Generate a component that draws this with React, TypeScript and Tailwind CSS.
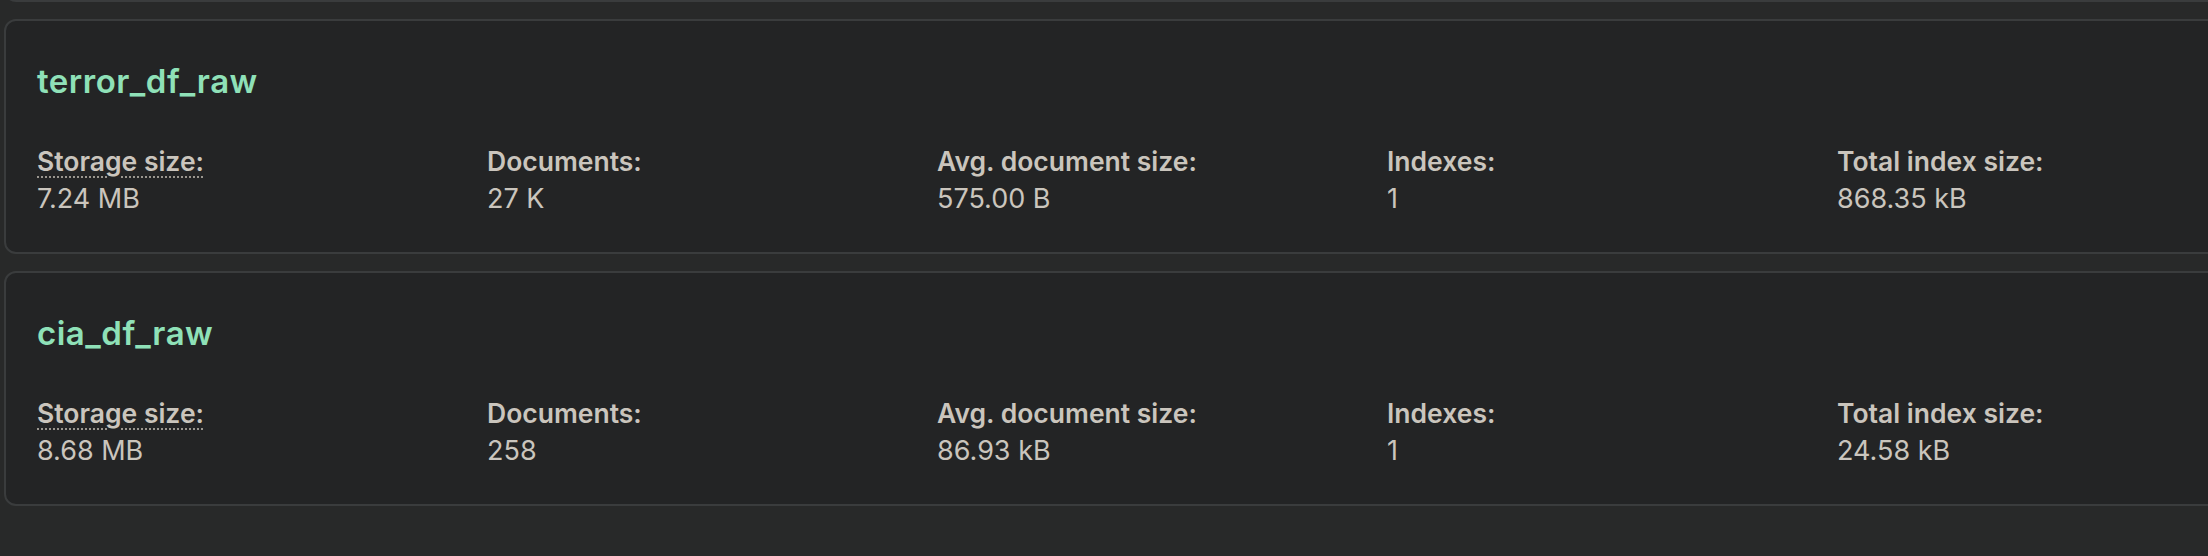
type Collection = {
  name: string;
  storage: string;
  documents: string;
  avgSize: string;
  indexes: string;
  indexSize: string;
};

const collections: Collection[] = [
  { name: "terror_df_raw", storage: "7.24 MB", documents: "27 K", avgSize: "575.00 B", indexes: "1", indexSize: "868.35 kB" },
  { name: "cia_df_raw", storage: "8.68 MB", documents: "258", avgSize: "86.93 kB", indexes: "1", indexSize: "24.58 kB" },
];

function Stat({ label, value, hint }: { label: string; value: string; hint?: boolean }) {
  return (
    <div className="flex flex-col">
      <span
        className={
          "text-[26.5px] leading-[38px] font-semibold " +
          (hint ? "underline decoration-dotted decoration-[2px] underline-offset-[5px] decoration-[#9a968f] w-fit" : "")
        }
      >
        {label}
      </span>
      <span className="text-[27px] leading-[38px] font-normal">{value}</span>
    </div>
  );
}

function CollectionCard({ c }: { c: Collection }) {
  return (
    <div className="h-[235px] w-[2330px] shrink-0 rounded-[12px] border-2 border-[#3a3c3d] bg-[#232425] pl-[31px] pt-[40px]">
      <h2 className="text-[33px] leading-[40px] font-semibold tracking-[0.5px] text-[#8fe1b8]">{c.name}</h2>
      <div className="mt-[41px] grid grid-cols-[450px_450px_450px_450px_450px] text-[#cac5bd]">
        <Stat label="Storage size:" value={c.storage} hint />
        <Stat label="Documents:" value={c.documents} />
        <Stat label="Avg. document size:" value={c.avgSize} />
        <Stat label="Indexes:" value={c.indexes} />
        <Stat label="Total index size:" value={c.indexSize} />
      </div>
    </div>
  );
}

export default function App() {
  return (
    <div className="h-[556px] w-[2208px] overflow-hidden bg-[#282929] pl-[4px] font-['Inter',sans-serif]">
      <div className="-mt-[233px] flex flex-col gap-[17px]">
        {/* previous card, scrolled out of view */}
        <div className="h-[235px] w-[2330px] shrink-0 rounded-[12px] border-2 border-[#3a3c3d] bg-[#232425]" />
        {collections.map((c) => (
          <CollectionCard key={c.name} c={c} />
        ))}
      </div>
    </div>
  );
}
